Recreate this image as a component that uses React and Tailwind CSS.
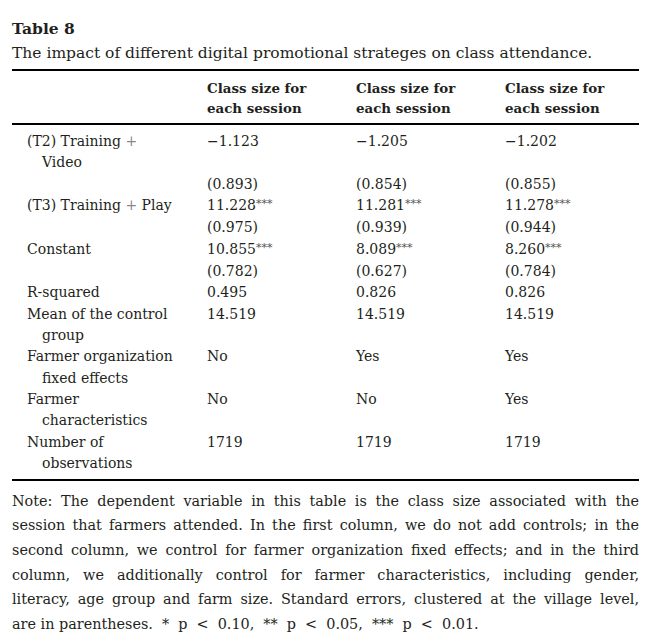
import React from "react";

const rows = [
    { label: ["(T2) Training +", "Video"], vals: ["−1.123", "−1.205", "−1.202"] },
    { label: [""], vals: ["(0.893)", "(0.854)", "(0.855)"] },
    { label: ["(T3) Training + Play"], vals: ["11.228***", "11.281***", "11.278***"] },
    { label: [""], vals: ["(0.975)", "(0.939)", "(0.944)"] },
    { label: ["Constant"], vals: ["10.855***", "8.089***", "8.260***"] },
    { label: [""], vals: ["(0.782)", "(0.627)", "(0.784)"] },
    { label: ["R-squared"], vals: ["0.495", "0.826", "0.826"] },
    { label: ["Mean of the control", "group"], vals: ["14.519", "14.519", "14.519"] },
    { label: ["Farmer organization", "fixed effects"], vals: ["No", "Yes", "Yes"] },
    { label: ["Farmer", "characteristics"], vals: ["No", "No", "Yes"] },
    { label: ["Number of", "observations"], vals: ["1719", "1719", "1719"] },
];

const noteLines = [
    "Note: The dependent variable in this table is the class size associated with the",
    "session that farmers attended. In the first column, we do not add controls; in the",
    "second column, we control for farmer organization fixed effects; and in the third",
    "column, we additionally control for farmer characteristics, including gender,",
    "literacy, age group and farm size. Standard errors, clustered at the village level,",
];

function Value({ text }) {
    const m = text.match(/^(.*?)(\*+)$/);
    if (!m) return <span>{text}</span>;
    return (
        <span>
            {m[1]}
            <span className="relative -top-[3px] text-[11px] text-[#555]">{m[2]}</span>
        </span>
    );
}

function Label({ text }) {
    if (!text.includes("+")) return <span>{text}</span>;
    const parts = text.split("+");
    return (
        <span>
            {parts[0]}
            <span className="text-[#888]">+</span>
            {parts[1]}
        </span>
    );
}

export default function App() {
    return (
        <div className="w-[662px] h-[641px] bg-white text-[#231f20] pl-[12px] pr-[23px] pt-[17px] font-['DejaVu_Serif',serif]">
            <div className="text-[15.5px] font-bold leading-[24px]">Table 8</div>
            <div className="text-[15.5px] leading-[24px]">
                The impact of different digital promotional strateges on class attendance.
            </div>

            <div className="mt-[4px] border-t-2 border-black"></div>
            <div className="grid grid-cols-[195px_149px_149px_1fr] text-[13.4px] font-bold leading-[20px] pt-[7px] pb-[5px]">
                <div></div>
                {[0, 1, 2].map((i) => (
                    <div key={i}>
                        <div>Class size for</div>
                        <div>each session</div>
                    </div>
                ))}
            </div>
            <div className="border-t-2 border-black"></div>

            <div className="grid grid-cols-[195px_149px_149px_1fr] text-[14px] leading-[21.35px] pt-[6px] pb-[4px]">
                {rows.map((r, idx) => (
                    <React.Fragment key={idx}>
                        <div>
                            {r.label.map((l, j) => (
                                <div key={j} className={j === 0 ? "pl-[15px] h-[21.35px]" : "pl-[30px]"}>
                                    <Label text={l} />
                                </div>
                            ))}
                        </div>
                        {r.vals.map((v, k) => (
                            <div key={k}>
                                <Value text={v} />
                            </div>
                        ))}
                    </React.Fragment>
                ))}
            </div>
            <div className="border-t-2 border-black"></div>

            <div className="text-[14.4px] leading-[24.7px] pt-[8px]">
                {noteLines.map((l, i) => (
                    <div key={i} className="text-justify [text-align-last:justify] whitespace-nowrap">
                        {l}
                    </div>
                ))}
                <div className="whitespace-nowrap">
                    are in parentheses.
                    <span className="[word-spacing:4.5px]"> * p &lt; 0.10, ** p &lt; 0.05, *** p &lt; 0.01.</span>
                </div>
            </div>
        </div>
    );
}
